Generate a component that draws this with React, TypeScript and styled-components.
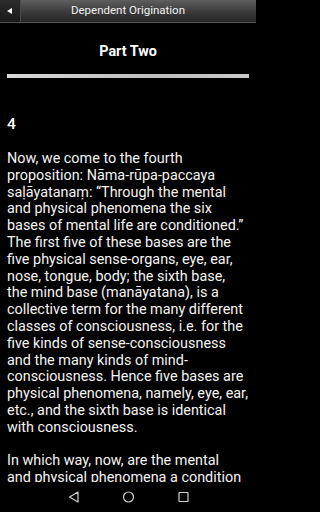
import React from "react";
import styled, { createGlobalStyle } from "styled-components";

const GlobalStyle = createGlobalStyle`
  html, body {
    margin: 0;
    padding: 0;
    background: #000;
  }
  body {
    font-family: Roboto, "Noto Sans", sans-serif;
    color: #fff;
    overflow: hidden;
  }
`;

const Screen = styled.div`
  width: 256px;
  height: 512px;
  display: flex;
  flex-direction: column;
  background: #000;
  position: relative;
  overflow: hidden;
`;

const TitleBar = styled.header`
  height: 22px;
  flex: none;
  display: grid;
  grid-template-columns: 21px 1fr 21px;
  align-items: stretch;
  background: linear-gradient(#5e5e5e, #3a3a3a 55%, #262626);
  border-bottom: 1px solid #555;
`;

const BackButton = styled.button`
  border: none;
  border-right: 1px solid #4a4a4a;
  background: linear-gradient(#2c2c2c, #1a1a1a);
  display: flex;
  align-items: center;
  justify-content: center;
  padding: 0;
`;

const Title = styled.h1`
  margin: 0;
  font-size: 11.5px;
  font-weight: 400;
  line-height: 21px;
  text-align: center;
  color: #f2f2f2;
`;

const Content = styled.main`
  flex: 1;
  padding: 0 7px;
  overflow: hidden;
`;

const PartHeading = styled.h2`
  margin: 20px 0 0;
  font-size: 14.3px;
  font-weight: 700;
  line-height: 17px;
  text-align: center;
`;

const Rule = styled.hr`
  margin: 14px 0 0;
  height: 4px;
  border: none;
  background: linear-gradient(90deg, #d8d8d8, #bdbdbd 60%, #c9c9c9);
`;

const SectionNumber = styled.div`
  margin-top: 38px;
  font-size: 15.5px;
  font-weight: 500;
  line-height: 17px;
`;

const Paragraph = styled.p`
  margin: 18px 0 0;
  font-size: 14.4px;
  line-height: 16.8px;
  color: #f4f4f4;
  & + & {
    margin-top: 16.8px;
  }
`;

const NavBar = styled.nav`
  position: absolute;
  left: 0;
  right: 0;
  bottom: 0;
  height: 30px;
  background: #000;
  display: flex;
  justify-content: center;
  align-items: center;
  gap: 44px;
`;

const NavIcon = styled.svg`
  width: 11px;
  height: 12px;
  fill: none;
  stroke: #d0d0d0;
  stroke-width: 1.2;
`;

export default function App() {
  return (
    <>
      <GlobalStyle />
      <Screen>
        <TitleBar>
          <BackButton aria-label="Back">
            <svg width="6" height="6" viewBox="0 0 6 6">
              <path d="M0 3 L5 0 L5 6 Z" fill="#fff" />
            </svg>
          </BackButton>
          <Title>Dependent Origination</Title>
          <span />
        </TitleBar>
        <Content>
          <PartHeading>Part Two</PartHeading>
          <Rule />
          <SectionNumber>4</SectionNumber>
          <Paragraph>
            Now, we come to the fourth proposition: Nāma-rūpa-paccaya
            saḷāyatanaṃ: “Through the mental and physical phenomena the six
            bases of mental life are conditioned.” The first five of these
            bases are the five physical sense-organs, eye, ear, nose, tongue,
            body; the sixth base,
            <br />
            the mind base (manāyatana), is a collective term for the many
            different classes of consciousness, i.e. for the five kinds of
            sense-consciousness and the many kinds of mind-consciousness. Hence
            five bases are physical phenomena, namely, eye, ear, etc., and the
            sixth base is identical with consciousness.
          </Paragraph>
          <Paragraph>
            In which way, now, are the mental
            <br />
            and physical phenomena a condition for the six bases?
          </Paragraph>
        </Content>
        <NavBar>
          <NavIcon viewBox="0 0 11 12">
            <path d="M10 1 L1.5 6 L10 11 Z" strokeLinejoin="round" />
          </NavIcon>
          <NavIcon viewBox="0 0 11 12">
            <circle cx="5.5" cy="6" r="5" />
          </NavIcon>
          <NavIcon viewBox="0 0 11 12">
            <rect x="1" y="1.5" width="9" height="9" rx="0.5" />
          </NavIcon>
        </NavBar>
      </Screen>
    </>
  );
}
